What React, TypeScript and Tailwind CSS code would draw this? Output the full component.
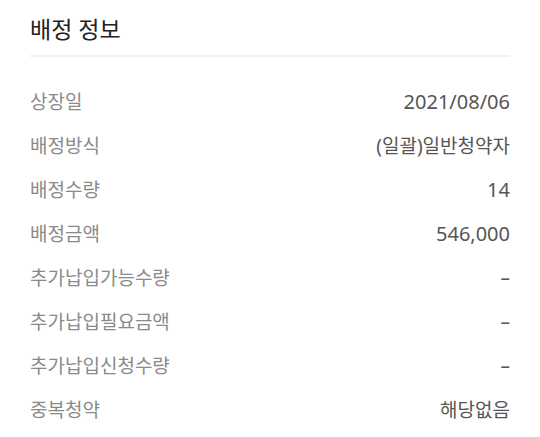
import React from "react";

const rows: [string, string, boolean][] = [
  ["상장일", "2021/08/06", true],
  ["배정방식", "(일괄)일반청약자", false],
  ["배정수량", "14", true],
  ["배정금액", "546,000", true],
  ["추가납입가능수량", "–", false],
  ["추가납입필요금액", "–", false],
  ["추가납입신청수량", "–", false],
  ["중복청약", "해당없음", false],
];

export default function App() {
  return (
    <div
      className="w-[540px] h-[437px] bg-white px-[30px] overflow-hidden"
      style={{ fontFamily: '"Noto Sans", "Noto Sans CJK KR", sans-serif' }}
    >
      <h2 className="pt-[13px] pb-[10px] text-[23px] leading-[32px] text-[#222]">배정 정보</h2>
      <div className="h-[2px] bg-[#f0f0f0]" />
      <div className="mt-[23px] flex flex-col">
        {rows.map(([k, v, num]) => (
          <div key={k} className="flex h-[44px] items-center justify-between text-[19px]">
            <span className="text-[#8a8a8a]">{k}</span>
            <span className={num ? "text-[20px] text-[#555]" : "text-[#555]"}>{v}</span>
          </div>
        ))}
      </div>
    </div>
  );
}
